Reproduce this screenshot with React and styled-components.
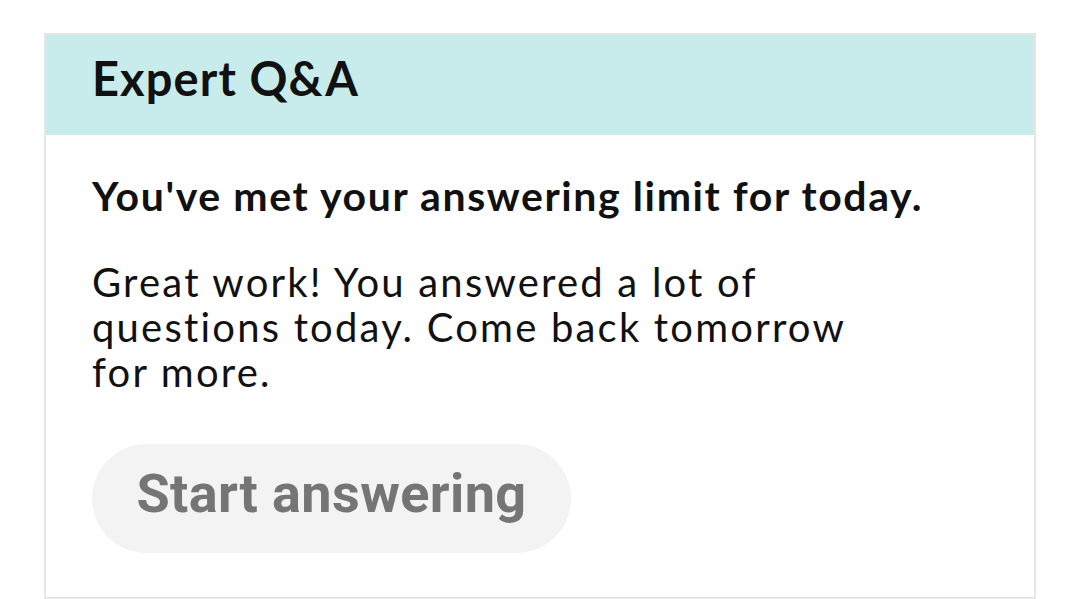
import React from "react";
import styled, { createGlobalStyle } from "styled-components";

const Global = createGlobalStyle`
  html, body { margin: 0; padding: 0; background: #ffffff; }
  body { font-family: Lato, "Open Sans", sans-serif; }
  * { box-sizing: border-box; }
`;

const Page = styled.div`
  padding: 33px 44px 0 44px;
  height: 599px;
  overflow: hidden;
`;

const Card = styled.section`
  width: 992px;
  height: 566px;
  border: 2px solid #e6e6e6;
  display: flex;
  flex-direction: column;
  background: #fff;
`;

const Header = styled.header`
  height: 100px;
  flex: 0 0 100px;
  background: #c8ecec;
  padding: 20px 0 0 46px;
`;

const Title = styled.h1`
  margin: 0;
  font-family: Lato, sans-serif;
  font-weight: 700;
  font-size: 47px;
  line-height: 47px;
  letter-spacing: 1.1px;
  color: #111;
`;

const Body = styled.div`
  padding: 37px 46px 0 46px;
  display: flex;
  flex-direction: column;
  align-items: flex-start;
`;

const Lead = styled.p`
  margin: 0;
  font-family: Lato, sans-serif;
  font-weight: 700;
  font-size: 41px;
  line-height: 48px;
  letter-spacing: 1.6px;
  color: #111;
`;

const Text = styled.p`
  margin: 40px 0 0 0;
  font-family: Lato, sans-serif;
  font-weight: 400;
  font-size: 40px;
  line-height: 45px;
  letter-spacing: 2.2px;
  color: #111;
  max-width: 800px;
`;

const Button = styled.button`
  margin-top: 49px;
  height: 109px;
  width: 479px;
  border: none;
  border-radius: 55px;
  background: #f3f3f3;
  color: #757575;
  font-family: Roboto, sans-serif;
  font-weight: 700;
  font-size: 54px;
  letter-spacing: 0.4px;
  padding: 0 0 10px 0;
  cursor: default;
`;

export default function App() {
  return (
    <>
      <Global />
      <Page>
        <Card>
          <Header>
            <Title>Expert Q&amp;A</Title>
          </Header>
          <Body>
            <Lead>You've met your answering limit for today.</Lead>
            <Text>
              Great work! You answered a lot of questions today. Come back tomorrow for more.
            </Text>
            <Button disabled>Start answering</Button>
          </Body>
        </Card>
      </Page>
    </>
  );
}
